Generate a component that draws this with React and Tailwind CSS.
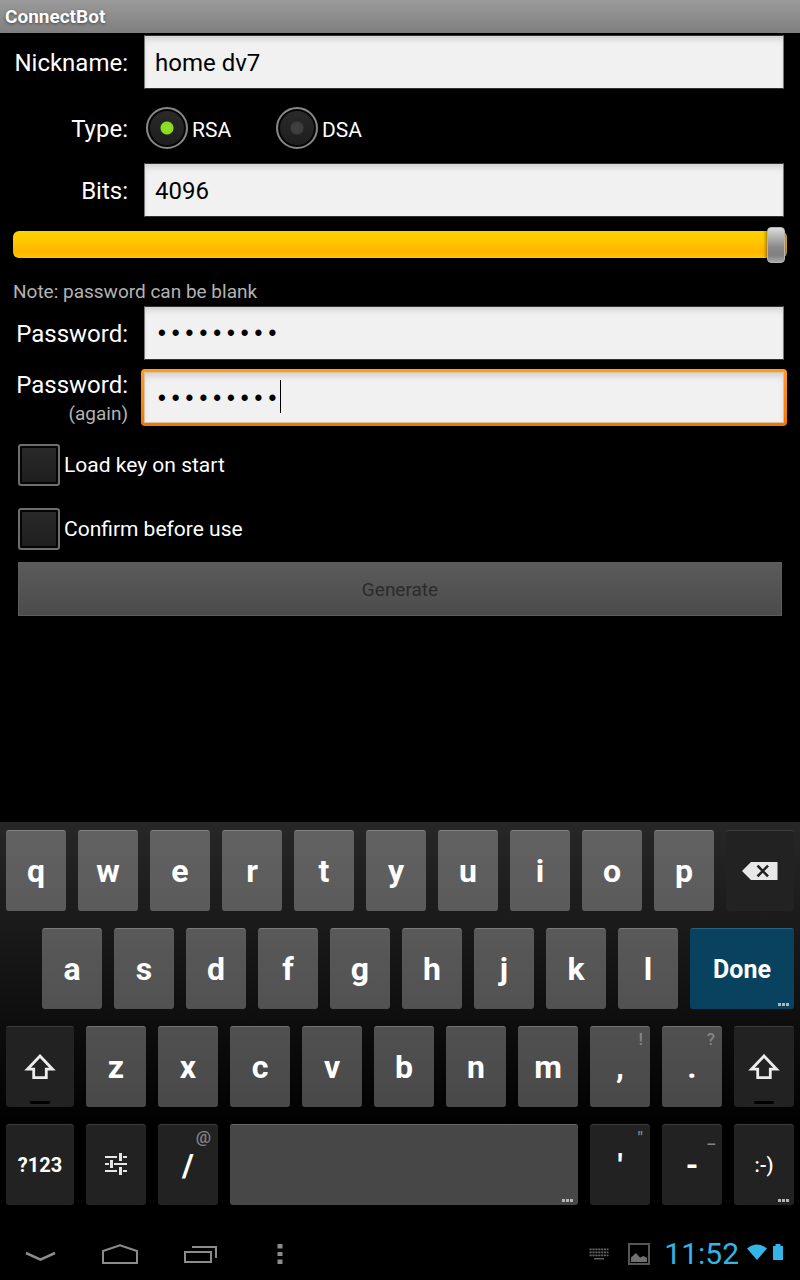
import React from "react";

const INPUT =
  "block h-[54px] w-full min-w-0 border border-x-[#777] border-y-[#333] bg-[#f1f1f1] pl-[10px] text-black outline-none shadow-[inset_0_5px_6px_-2px_rgba(0,0,0,0.14)]";
const TEXT = " pt-[2px] text-2xl";
const DOTS = " pt-1 font-['Liberation_Mono',monospace] text-[23px]";
const LABEL = "pt-[2px] text-right text-2xl leading-7 text-white";
const RADIO =
  "size-[42px] shrink-0 appearance-none rounded-full border-2 border-[#878787] shadow-[inset_0_0_0_2px_#050505] bg-[radial-gradient(circle_at_50%_50%,#414141_0,#3c3c3c_6px,transparent_7px),linear-gradient(#2b2b2b,#1d1d1d)] checked:bg-[radial-gradient(circle_at_50%_50%,#93e02a_0,#86dc1c_6px,transparent_7px),linear-gradient(#2b2b2b,#1d1d1d)]";
const CHECK =
  "size-[42px] shrink-0 appearance-none rounded-[3px] border-2 border-[#6e6e6e] bg-linear-to-b from-[#2a2a2a] to-[#1e1e1e] shadow-[inset_0_0_0_2px_#050505]";

function Row({ label, htmlFor, children }) {
  return (
    <div className="grid grid-cols-[115px_minmax(0,1fr)] items-center gap-4 pr-4">
      <label htmlFor={htmlFor} className={LABEL}>
        {label}
      </label>
      {children}
    </div>
  );
}

function More() {
  return (
    <svg className="absolute right-[5px] bottom-[3px]" width="11" height="3" viewBox="0 0 11 3" fill="#b4b4b4">
      <rect x="0" width="3" height="3" />
      <rect x="4" width="3" height="3" />
      <rect x="8" width="3" height="3" />
    </svg>
  );
}

function Key({ children, hint, more, dark, size = "grow-[60]", text = "text-[32px] font-bold", tone, label }) {
  const color = tone || (dark ? "bg-[#222] border-[#3c3c3c]" : "bg-white/28 border-white/20");
  return (
    <button
      type="button"
      aria-label={label}
      className={`relative flex h-[81px] min-w-0 basis-0 items-center justify-center rounded-[3px] border-t leading-none text-white ${size} ${text} ${color}`}
    >
      {children}
      {hint && <span className="absolute top-[2px] right-[7px] text-[17px] leading-5 font-medium text-[#858585]">{hint}</span>}
      {more && <More />}
    </button>
  );
}

function Shift() {
  return (
    <>
      <svg width="32" height="26" viewBox="0 0 32 26" fill="none" stroke="#ececec" strokeWidth="2.8">
        <path d="M16 2 L28.5 15.2 H22.3 V23.6 H9.7 V15.2 H3.5 Z" />
      </svg>
      <span className="absolute bottom-[3px] h-[3px] w-5 rounded-sm bg-black" />
    </>
  );
}

function Letters({ chars }) {
  return chars.split("").map((c) => <Key key={c}>{c}</Key>);
}

function Keyboard() {
  return (
    <section
      aria-label="Keyboard"
      className="flex flex-col gap-[17px] bg-[linear-gradient(#272727,#000_310px)] px-[6px] pt-2 pb-[27px]"
    >
      <div className="flex gap-3">
        <Letters chars="qwertyuiop" />
        <Key dark size="grow-[68]" label="Delete">
          <svg width="36" height="20" viewBox="0 0 36 20">
            <path d="M0 10 L9 1 H35.5 V19 H9 Z" fill="#e8e8e8" />
            <path d="M15.5 4.7 L26 15.3 M26 4.7 L15.5 15.3" stroke="#222" strokeWidth="2.6" />
          </svg>
        </Key>
      </div>
      <div className="flex gap-3 pl-9">
        <Letters chars="asdfghjkl" />
        <Key size="grow-[104]" text="text-[25px] font-bold" tone="bg-[#08425f] border-[#2b5f7b]" more>
          Done
        </Key>
      </div>
      <div className="flex gap-3">
        <Key dark size="grow-[68]" label="Shift">
          <Shift />
        </Key>
        <Letters chars="zxcvbnm" />
        <Key hint="!">,</Key>
        <Key hint="?">.</Key>
        <Key dark label="Right shift">
          <Shift />
        </Key>
      </div>
      <div className="flex gap-3">
        <Key dark size="grow-[68]" text="text-xl font-bold">
          ?123
        </Key>
        <Key dark label="Settings">
          <svg className="mb-[2px]" width="22" height="24" viewBox="0 0 22 24" stroke="#e6e6e6" fill="none">
            <path d="M0 5 H12 M18 5 H22 M0 12 H4 M9 12 H22 M0 19 H12 M18 19 H22" strokeWidth="2" />
            <path d="M15.5 1 V9 M6.5 8 V16 M15.5 15 V23" strokeWidth="3" />
          </svg>
        </Key>
        <Key dark hint="@">/</Key>
        <Key size="grow-[348]" more label="Space" />
        <Key dark hint={'"'}>'</Key>
        <Key dark hint="_">-</Key>
        <Key dark text="text-xl font-medium" more>
          :-)
        </Key>
      </div>
    </section>
  );
}

function NavBar() {
  return (
    <footer className="flex h-12 items-center justify-between bg-black pb-[5px]">
      <nav className="flex text-[#8c8c8c]">
        <button type="button" aria-label="Hide keyboard" className="flex h-10 w-20 items-center justify-center">
          <svg width="32" height="20" viewBox="0 0 32 20" fill="none" stroke="currentColor" strokeWidth="2.6">
            <path d="M2 9 L16.5 15.6 L31 9" />
          </svg>
        </button>
        <button type="button" aria-label="Home" className="flex h-10 w-20 items-center justify-center">
          <svg width="38" height="22" viewBox="0 0 38 22" fill="none" stroke="currentColor" strokeWidth="2">
            <path d="M2 20 V8 L19 2.2 L36 8 V20 Z" />
          </svg>
        </button>
        <button type="button" aria-label="Recent apps" className="flex h-10 w-20 items-center justify-center">
          <svg width="34" height="20" viewBox="0 0 34 20" fill="none" stroke="currentColor" strokeWidth="2">
            <path d="M2 8 H28 V18 H2 Z M9 3 H33 V14" />
          </svg>
        </button>
        <button type="button" aria-label="Menu" className="flex h-10 w-20 items-center justify-center">
          <svg width="6" height="20" viewBox="0 0 6 20" fill="currentColor">
            <path d="M.5 0 h5 v4.5 h-5z M.5 8 h5 v4 h-5z M.5 15.5 h5 v4.5 h-5z" />
          </svg>
        </button>
      </nav>
      <div className="flex items-center pr-[17px]">
        <svg width="20" height="12" viewBox="0 0 20 12" fill="none" stroke="#626262" strokeWidth="1.8">
          <path d="M.5 1.4 H19.5 M.5 4.4 H19.5 M.5 7.4 H19.5" strokeDasharray="2.2 .7" />
          <path d="M5 10.7 H15" strokeWidth="1.5" />
        </svg>
        <svg className="ml-[19px]" width="22" height="22" viewBox="0 0 22 22">
          <rect x="1" y="1" width="20" height="20" fill="none" stroke="#575757" strokeWidth="2" />
          <path d="M3 19 V14.5 L8 10 L12 14.5 L15.5 13 L19 15 V19 Z" fill="#707070" />
        </svg>
        <time className="ml-[14px] text-[30px] leading-8 text-[#33b5e5]">11:52</time>
        <svg className="mb-1 ml-2" width="20" height="16" viewBox="0 0 20 16" fill="#33b5e5">
          <path d="M0 4.5 Q10 -3.5 20 4.5 L10 16 Z" />
        </svg>
        <svg className="mb-1 ml-[6px]" width="10" height="16" viewBox="0 0 10 16" fill="#33b5e5">
          <path d="M2.5 0 H7.5 V2 H10 V16 H0 V2 H2.5 Z" />
        </svg>
      </div>
    </footer>
  );
}

export default function App() {
  return (
    <div className="flex min-h-screen flex-col bg-black font-[Roboto,sans-serif] text-white">
      <header className="flex h-[33px] items-center bg-linear-to-b from-[#9b9b9b] to-[#7f7f7f] pl-[5px]">
        <h1 className="text-[19px] leading-6 font-bold [text-shadow:0_1px_3px_#444]">ConnectBot</h1>
      </header>

      <form className="flex flex-1 flex-col pt-[2px] pb-8 pl-[13px]">
        <Row label="Nickname:" htmlFor="nick">
          <input id="nick" type="text" defaultValue="home dv7" className={INPUT + TEXT} />
        </Row>

        <div
          role="radiogroup"
          aria-labelledby="type-label"
          className="grid h-[74px] grid-cols-[115px_minmax(0,1fr)] items-center gap-4 pt-[3px]"
        >
          <span id="type-label" className={LABEL}>
            Type:
          </span>
          <div className="flex pl-[2px] text-[21px] leading-6">
            <label className="flex w-[130px] items-center gap-1">
              <input type="radio" name="type" defaultChecked className={RADIO} />
              <span className="pt-1">RSA</span>
            </label>
            <label className="flex items-center gap-1">
              <input type="radio" name="type" className={RADIO} />
              <span className="pt-1">DSA</span>
            </label>
          </div>
        </div>

        <Row label="Bits:" htmlFor="bits">
          <input id="bits" type="text" defaultValue="4096" className={INPUT + TEXT} />
        </Row>

        <div className="flex pt-[14px] pr-[13px]">
          <input
            type="range"
            aria-label="Key size in bits"
            min="1024"
            max="4096"
            defaultValue="4096"
            className="block h-[27px] w-full appearance-none rounded-md bg-[linear-gradient(#ffd300,#ffc600_40%,#ffb400_78%,#ffc800)] pr-[2px] [&::-webkit-slider-runnable-track]:h-[27px] [&::-webkit-slider-thumb]:-mt-1 [&::-webkit-slider-thumb]:h-9 [&::-webkit-slider-thumb]:w-[18px] [&::-webkit-slider-thumb]:appearance-none [&::-webkit-slider-thumb]:rounded-[4px] [&::-webkit-slider-thumb]:border [&::-webkit-slider-thumb]:border-[#b5b5b5] [&::-webkit-slider-thumb]:bg-[linear-gradient(#dcdcdc,#8a8a8a_55%,#808080_80%,#a8a8a8)] [&::-webkit-slider-thumb]:shadow-[0_0_4px_#000a]"
          />
        </div>

        <p className="pt-[22px] pb-[2px] text-[19px] leading-6 text-[#b3b3b3]">Note: password can be blank</p>

        <Row label="Password:" htmlFor="pw">
          <input id="pw" type="password" defaultValue="secretkey" className={INPUT + DOTS} />
        </Row>

        <div className="mt-[9px] grid grid-cols-[115px_minmax(0,1fr)] items-center gap-[13px] pr-[13px]">
          <label htmlFor="pw2" className={`${LABEL} h-[57px]`}>
            Password:
            <span className="mt-[3px] block text-[19px] leading-6 text-[#b3b3b3]">(again)</span>
          </label>
          <div className="relative rounded-[4px] bg-linear-to-b from-[#ff9a25] to-[#ee7700] p-[3px]">
            <input
              id="pw2"
              type="password"
              defaultValue="secretkey"
              className="block h-[51px] w-full min-w-0 border border-[#dcc3a3] bg-[#f1f1f1] pt-1 pl-[10px] font-['Liberation_Mono',monospace] text-[23px] text-black caret-transparent shadow-[inset_0_5px_6px_-2px_rgba(0,0,0,0.14)] outline-none"
            />
            <span className="absolute top-[11px] left-[139px] h-[33px] w-px bg-black" />
          </div>
        </div>

        <div className="flex flex-col gap-[22px] pt-[18px] pl-[5px] text-[21px] leading-6">
          <label className="flex items-center gap-1">
            <input type="checkbox" className={CHECK} />
            Load key on start
          </label>
          <label className="flex items-center gap-1">
            <input type="checkbox" className={CHECK} />
            Confirm before use
          </label>
        </div>

        <button
          type="submit"
          disabled
          className="mt-3 mr-[18px] ml-[5px] h-[54px] border border-[#5c5c5c] bg-linear-to-b from-[#5b5b5b] to-[#4b4b4b] pt-[2px] text-[19px] text-[#2b2b2b]"
        >
          Generate
        </button>
      </form>

      <Keyboard />
      <NavBar />
    </div>
  );
}
